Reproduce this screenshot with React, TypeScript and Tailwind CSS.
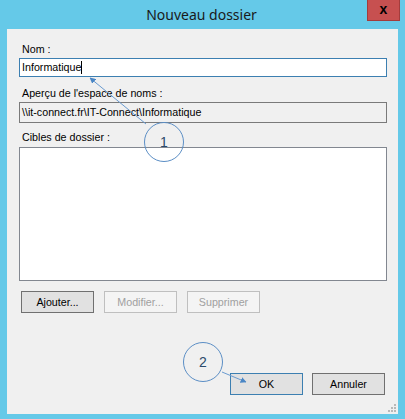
const ui = { fontFamily: '"Liberation Sans", Arial, sans-serif' };

function Btn({ label, kind }: { label: string; kind: 'normal' | 'default' | 'disabled' }) {
  const cls =
    kind === 'default'
      ? 'border-[#3c7fb1] bg-[#e1e1e1] text-black'
      : kind === 'disabled'
        ? 'border-[#bfbfbf] bg-[#f4f4f4] text-[#a0a0a0]'
        : 'border-[#707070] bg-[#e1e1e1] text-black';
  return (
    <div className={`w-[73px] h-[22px] border flex items-center justify-center text-[10.7px] ${cls}`}>
      {label}
    </div>
  );
}

function Annotations() {
  return (
    <svg className="absolute inset-0 pointer-events-none" width={405} height={419} viewBox="0 0 405 419">
      <defs>
        <marker id="ah" viewBox="0 0 10 10" refX="9" refY="5" markerWidth="6" markerHeight="6" orient="auto">
          <path d="M0 0 L10 5 L0 10 z" fill="#4a86c5" />
        </marker>
      </defs>
      <line x1="146" y1="124" x2="90" y2="78" stroke="#6a9bd0" strokeWidth="1" markerEnd="url(#ah)" />
      <circle cx="164" cy="142" r="19.5" fill="none" stroke="#5b8ec5" strokeWidth="1" />
      <text x="164" y="147" textAnchor="middle" fontSize="14" fill="#2c4a6b" style={ui}>1</text>
      <line x1="222" y1="372" x2="246" y2="382" stroke="#6a9bd0" strokeWidth="1" markerEnd="url(#ah)" />
      <circle cx="203" cy="362" r="19.5" fill="none" stroke="#5b8ec5" strokeWidth="1" />
      <text x="203" y="367" textAnchor="middle" fontSize="14" fill="#2c4a6b" style={ui}>2</text>
      {/* resize grip */}
      <g fill="#b8b8b8">
        <rect x="394" y="404" width="2" height="2" />
        <rect x="391" y="407" width="2" height="2" />
        <rect x="394" y="407" width="2" height="2" />
        <rect x="388" y="410" width="2" height="2" />
        <rect x="391" y="410" width="2" height="2" />
        <rect x="394" y="410" width="2" height="2" />
      </g>
    </svg>
  );
}

export default function App() {
  return (
    <div className="relative w-[405px] h-[419px] bg-[#65c9e8] overflow-hidden" style={ui}>
      <div className="h-[29px] flex items-start">
        <div className="flex-1 h-[29px] flex items-center justify-center pl-[36px]">
          <span className="text-[14px] text-[#1a1a1a]" style={{ fontFamily: '"Noto Sans", "Open Sans", sans-serif' }}>
            Nouveau dossier
          </span>
        </div>
        <div className="w-[33px] h-[21px] bg-[#c75050] border border-[#a33c3c] border-t-0 flex items-center justify-center mr-[5px]">
          <span className="text-[14px] font-bold text-black leading-none mt-[-2px]">x</span>
        </div>
      </div>

      <div className="mx-[7px] h-[385px] bg-[#f0f0f0] flex flex-col text-[10.7px] text-black">
        <div className="mt-[14px] ml-[15px] h-[13px] leading-[13px]">Nom :</div>
        <div className="mt-[2px] ml-[12px] w-[368px] h-[19px] border border-[#3c7fb1] bg-white flex items-center px-[2px]">
          <span>Informatique</span>
          <span className="w-px h-[13px] bg-black" />
        </div>

        <div className="mt-[10px] ml-[15px] h-[13px] leading-[13px]">Aperçu de l'espace de noms :</div>
        <div className="mt-[2px] ml-[12px] w-[368px] h-[21px] border border-[#7a7a7a] bg-[#f0f0f0] flex items-center px-[2px]">
          \\it-connect.fr\IT-Connect\Informatique
        </div>

        <div className="mt-[8px] ml-[15px] h-[13px] leading-[13px]">Cibles de dossier :</div>
        <div className="mt-[3px] ml-[12px] w-[368px] h-[134px] border border-[#828790] bg-white" />

        <div className="mt-[10px] ml-[14px] flex gap-[10px]">
          <Btn label="Ajouter..." kind="normal" />
          <Btn label="Modifier..." kind="disabled" />
          <Btn label="Supprimer" kind="disabled" />
        </div>

        <div className="mt-[60px] mr-[13px] flex justify-end gap-[9px]">
          <Btn label="OK" kind="default" />
          <Btn label="Annuler" kind="normal" />
        </div>
      </div>

      <Annotations />
    </div>
  );
}
